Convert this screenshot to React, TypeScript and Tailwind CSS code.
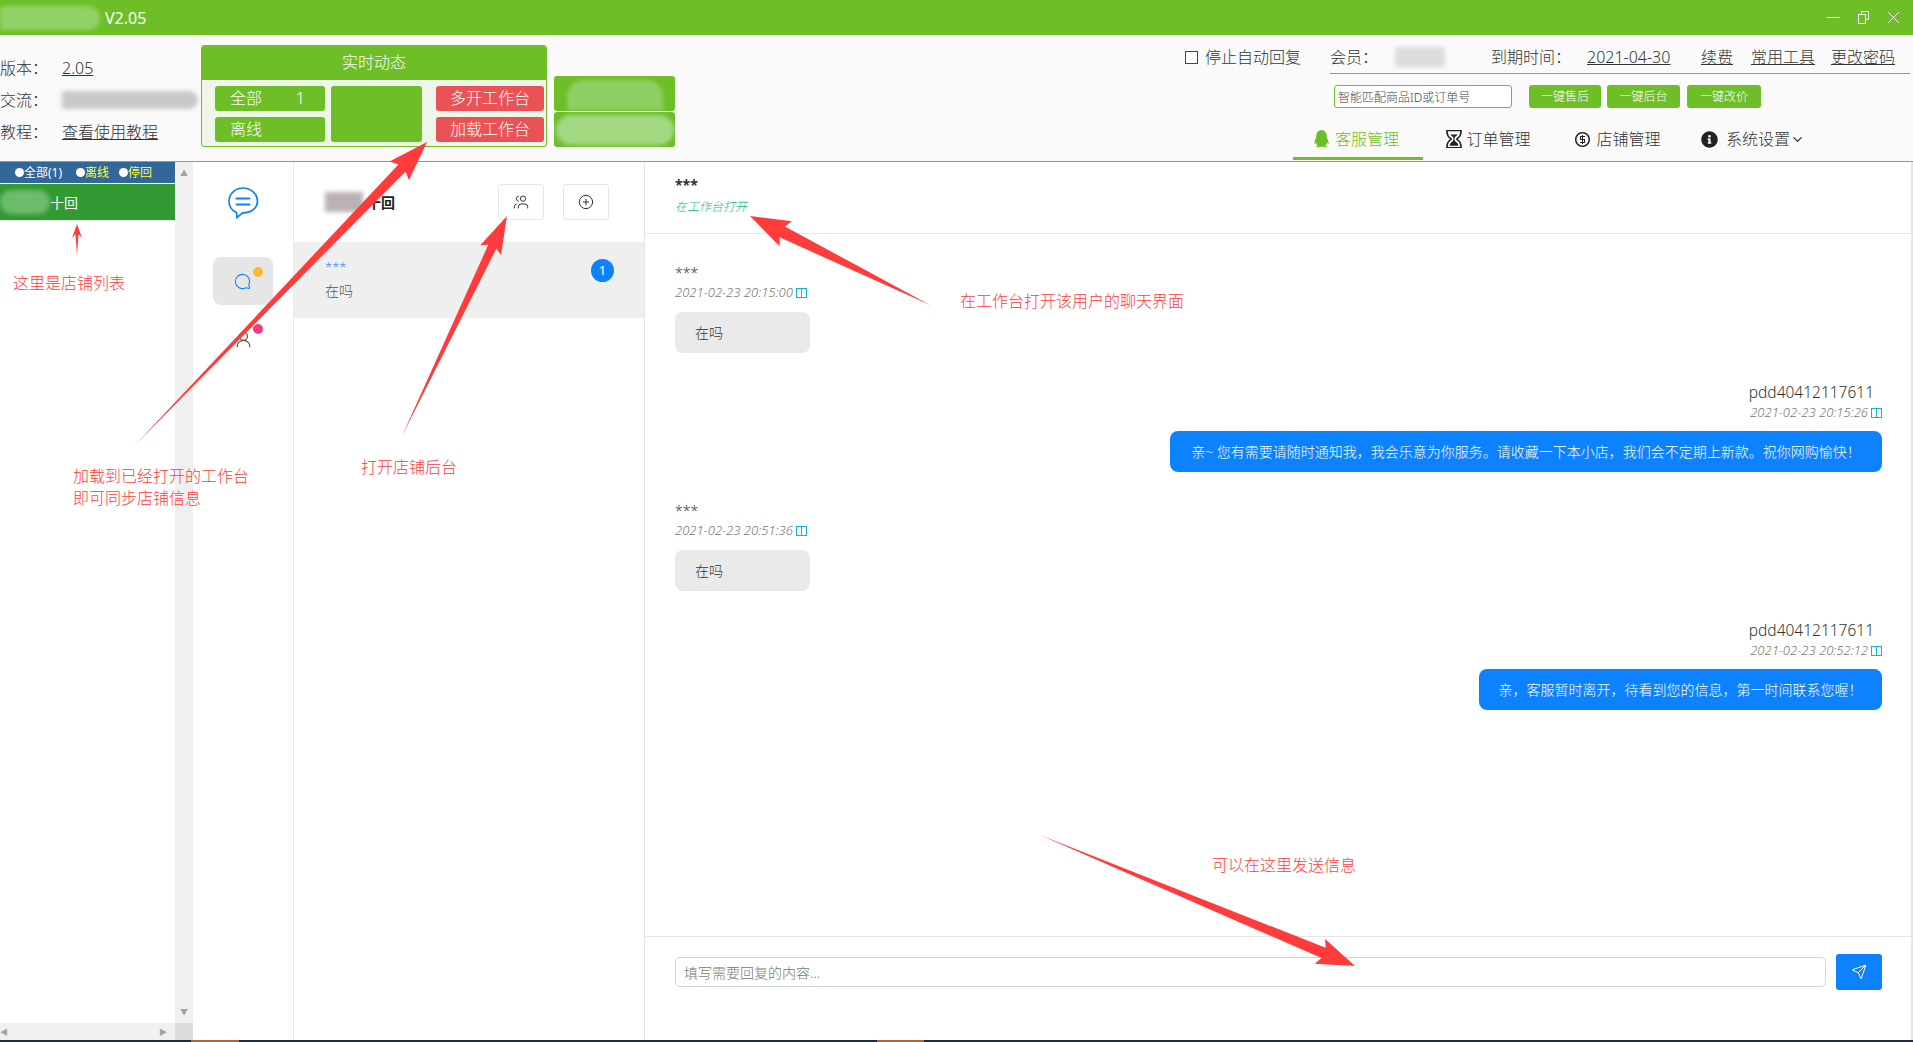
import { ChevronDown, CirclePlus, MessageCircle, Send, UserRound, Users } from 'lucide-react'
import { FaInfoCircle, FaQq } from 'react-icons/fa'
import { ImCoinDollar, ImHourGlass } from 'react-icons/im'

const arrows = [
  { from: [135, 445], to: [427, 142], w: 10, head: 27, len: 40 },
  { from: [402, 436], to: [507, 216], w: 9, head: 23, len: 38 },
  { from: [930, 305], to: [750, 216], w: 12, head: 28, len: 40 },
  { from: [1040, 835], to: [1355, 966], w: 11, head: 27, len: 38 },
  { from: [77, 256], to: [77, 224], w: 3, head: 10, len: 14 },
]

function arrowPoints(a: (typeof arrows)[number]) {
  const dx = a.to[0] - a.from[0]
  const dy = a.to[1] - a.from[1]
  const d = Math.hypot(dx, dy)
  const ux = dx / d
  const uy = dy / d
  const bx = a.to[0] - ux * a.len
  const by = a.to[1] - uy * a.len
  const p = (s: number, back = 0) => `${bx - uy * s + ux * back},${by + ux * s + uy * back}`
  return [`${a.from[0]},${a.from[1]}`, p(a.w / 2, 4), p(a.head / 2), `${a.to[0]},${a.to[1]}`, p(-a.head / 2), p(-a.w / 2, 4)].join(' ')
}

function Smudge({ className }: { className: string }) {
  return <div className={`blur-[2px] ${className}`} />
}

function Book() {
  return (
    <svg width="11" height="10" viewBox="0 0 11 10" fill="none" stroke="#13b5d6" strokeWidth="1" className="shrink-0">
      <rect x="0.5" y="0.5" width="10" height="9" />
      <path d="M5.5 0.5v9" />
    </svg>
  )
}

function TitleBar() {
  return (
    <div className="h-[35px] bg-[#6ebe28] flex items-center text-white shrink-0">
      <Smudge className="w-[100px] h-[24px] bg-[#91d168] rounded-r-full" />
      <span className="ml-[5px] text-[16px] font-normal">V2.05</span>
      <div className="ml-auto flex items-center pr-[14px]">
        <svg width="13" height="11" viewBox="0 0 13 11" stroke="white" strokeWidth="1">
          <path d="M0 5.500h13" />
        </svg>
        <svg width="11" height="13" viewBox="0 0 11 13" fill="none" stroke="white" strokeWidth="1" className="ml-[18px]">
          <rect x="0.500" y="3.500" width="7" height="9" />
          <path d="M3.500 3V0.500h7v8H8" />
        </svg>
        <svg width="11" height="11" viewBox="0 0 11 11" stroke="white" strokeWidth="0.900" className="ml-[19px]">
          <path d="M0 0l11 11M11 0L0 11" />
        </svg>
      </div>
    </div>
  )
}

function InfoRow({ label, children }: { label: string; children: React.ReactNode }) {
  return (
    <div className="h-[32px] flex items-center text-[16px] text-[#333]">
      <span className="w-[62px]">{label}</span>
      {children}
    </div>
  )
}

function Header() {
  return (
    <header className="h-[127px] shrink-0 bg-[#fafafa] border-b border-[#6ebe28] flex">
      <div className="w-[201px] shrink-0 pt-[17px]">
        <InfoRow label="版本：">
          <span className="underline">2.05</span>
        </InfoRow>
        <InfoRow label="交流：">
          <Smudge className="w-[136px] h-[18px] bg-[#c9c8c8] rounded-r-full" />
        </InfoRow>
        <InfoRow label="教程：">
          <span className="underline">查看使用教程</span>
        </InfoRow>
      </div>

      <div className="mt-[10px] w-[346px] h-[102px] border border-[#6ebe28] rounded-[3px] overflow-hidden bg-[#eff6e9] shrink-0">
        <div className="h-[34px] pb-[3px] bg-[#6ebe28] text-white text-[16px] flex items-center justify-center">实时动态</div>
        <div className="flex pl-[13px] pt-[6px] text-white text-[16px]">
          <div className="w-[110px] flex flex-col gap-[6px]">
            <div className="h-[25px] pb-[1px] rounded-[3px] bg-[#6ebe28] flex items-center justify-between pl-[15px] pr-[20px]">
              <span>全部</span>
              <span>1</span>
            </div>
            <div className="h-[25px] pb-[1px] rounded-[3px] bg-[#6ebe28] flex items-center pl-[15px]">离线</div>
          </div>
          <div className="ml-[6px] w-[91px] h-[56px] rounded-[3px] bg-[#6ebe28]" />
          <div className="ml-[14px] w-[108px] flex flex-col gap-[6px]">
            <div className="h-[25px] pb-[1px] rounded-[3px] bg-[#e95256] flex items-center justify-center">多开工作台</div>
            <div className="h-[25px] pb-[1px] rounded-[3px] bg-[#e95256] flex items-center justify-center">加载工作台</div>
          </div>
        </div>
      </div>

      <div className="ml-[7px] mt-[41px] w-[121px] flex flex-col gap-[1px] shrink-0">
        <div className="h-[35px] rounded-[3px] bg-[#6ebe28] overflow-hidden flex justify-center pt-[4px]">
          <Smudge className="w-[96px] h-[30px] rounded-t-[16px] bg-[#8fcf64]" />
        </div>
        <div className="h-[35px] rounded-[3px] bg-[#6ebe28] overflow-hidden flex justify-center items-center">
          <Smudge className="w-[118px] h-[30px] rounded-full bg-[#a3d982]" />
        </div>
      </div>

      <div className="ml-auto w-[728px] flex flex-col text-[#333]">
        <div className="h-[39px] flex items-center text-[16px]">
          <div className="w-[145px] pt-[5px] flex items-center">
            <span className="w-[13px] h-[13px] border border-[#444] bg-white" />
            <span className="ml-[7px]">停止自动回复</span>
          </div>
          <div className="flex-1 h-full pt-[5px] border-b border-[#6ebe28] flex items-center mr-[3px] whitespace-nowrap">
            <span className="w-[65px]">会员：</span>
            <Smudge className="w-[50px] h-[20px] bg-[#dcdcdc]" />
            <span className="ml-[46px] w-[96px]">到期时间：</span>
            <span className="underline w-[86px]">2021-04-30</span>
            <span className="underline ml-[28px]">续费</span>
            <span className="underline ml-[18px]">常用工具</span>
            <span className="underline ml-[16px]">更改密码</span>
          </div>
        </div>
        <div className="mt-[11px] ml-[149px] flex text-[12px]">
          <input
            readOnly
            value="智能匹配商品ID或订单号"
            className="w-[178px] h-[23px] px-[3px] rounded-[3px] border border-[#6ebe28] bg-white text-[#444] outline-none"
          />
          <div className="ml-[17px] w-[72px] h-[23px] rounded-[3px] bg-[#6ebe28] text-white flex items-center justify-center">一键售后</div>
          <div className="ml-[6px] w-[73px] h-[23px] rounded-[3px] bg-[#6ebe28] text-white flex items-center justify-center">一键后台</div>
          <div className="ml-[7px] w-[74px] h-[23px] rounded-[3px] bg-[#6ebe28] text-white flex items-center justify-center">一键改价</div>
        </div>
        <nav className="mt-[12px] ml-[108px] flex text-[16px]">
          <div className="w-[130px] h-[40px] border-b-[3px] border-[#6ebe28] text-[#6ebe28] flex items-center justify-center gap-[5px] pr-[4px]">
            <FaQq size={17} />
            <span>客服管理</span>
          </div>
          <div className="w-[130px] h-[40px] pb-[2px] flex items-center justify-center gap-[3px]">
            <ImHourGlass size={18} className="text-[#222]" />
            <span>订单管理</span>
          </div>
          <div className="w-[130px] h-[40px] pb-[2px] flex items-center justify-center gap-[5px]">
            <ImCoinDollar size={16} className="text-[#222]" />
            <span>店铺管理</span>
          </div>
          <div className="w-[130px] h-[40px] pb-[2px] flex items-center justify-center gap-[8px] pl-[10px] whitespace-nowrap">
            <FaInfoCircle size={17} className="text-[#222]" />
            <span className="flex items-center">
              系统设置
              <ChevronDown size={15} strokeWidth={2} />
            </span>
          </div>
        </nav>
      </div>
    </header>
  )
}

function ShopPane() {
  return (
    <div className="w-[193px] shrink-0 flex flex-col">
      <div className="flex-1 flex min-h-0">
        <div className="w-[175px] flex flex-col">
          <div className="h-[21px] bg-[#336699] flex items-center pl-[15px] text-[12px] font-normal text-white">
            <span className="w-[9px] h-[9px] rounded-full bg-white" />
            <span>全部(1)</span>
            <span className="ml-[14px] w-[9px] h-[9px] rounded-full bg-white" />
            <span className="text-[#ffff33]">离线</span>
            <span className="ml-[10px] w-[9px] h-[9px] rounded-full bg-white" />
            <span className="text-[#ffff33]">停回</span>
          </div>
          <div className="mt-[1px] h-[37px] bg-[#339933] flex items-center text-white text-[14px] font-normal border-b border-[#e5e5e5]">
            <Smudge className="w-[50px] h-[24px] bg-[#6dbb6d] rounded-full" />
            <span>十回</span>
          </div>
        </div>
        <div className="w-[18px] bg-[#f0f0f0] flex flex-col items-center justify-between py-[7px] text-[8px] leading-none text-[#a3a3a3]">
          <span>▲</span>
          <span>▼</span>
        </div>
      </div>
      <div className="h-[17px] shrink-0 flex">
        <div className="w-[175px] bg-[#f0f0f0] flex items-center justify-between text-[8px] leading-none text-[#a3a3a3] pr-[8px]">
          <span>◀</span>
          <span>▶</span>
        </div>
        <div className="w-[18px] bg-[#dcdcdc]" />
      </div>
    </div>
  )
}

function NavRail() {
  return (
    <div className="w-[101px] shrink-0 border-r border-[#e9e9e9] flex flex-col items-center">
      <svg width="32" height="34" viewBox="0 0 32 34" fill="none" stroke="#0d82ff" strokeWidth="1.700" strokeLinecap="round" className="mt-[24px]">
        <path d="M16 2C8.300 2 2 7.800 2 15c0 5.600 3.600 9.800 7.500 11.600L10 31.500l5.500-4.600c8 .5 15-4.600 15-11.900C30.500 7.800 23.700 2 16 2Z" />
        <path d="M9.500 12.500h13M9.500 18.500h13" strokeWidth="2" />
      </svg>
      <div className="relative mt-[37px] w-[60px] h-[48px] bg-[#e6e6e6] rounded-[8px] flex items-center justify-center">
        <MessageCircle size={17} strokeWidth={1.500} className="text-[#0d82ff] -scale-x-100 mr-[1px]" />
        <span className="absolute left-[40px] top-[10px] w-[10px] h-[10px] rounded-full bg-[#ffb52e]" />
      </div>
      <div className="relative mt-[19px] w-[60px] flex justify-center">
        <UserRound size={19} strokeWidth={1.500} className="text-[#555] mt-[6px]" />
        <span className="absolute left-[40px] top-0 w-[10px] h-[10px] rounded-full bg-[#f73a78]" />
      </div>
    </div>
  )
}

function ContactList() {
  return (
    <div className="w-[351px] shrink-0 border-r border-[#e6e6e6]">
      <div className="h-[71px] pt-[9px] flex items-center pl-[31px]">
        <Smudge className="w-[38px] h-[20px] bg-[#bbb3b3]" />
        <span className="ml-[4px] text-[14px] font-bold text-[#222]">十回</span>
        <div className="ml-auto mr-[35px] flex gap-[19px]">
          <div className="w-[46px] h-[36px] rounded-[3px] border border-[#e6e6e6] flex items-center justify-center">
            <Users size={16} strokeWidth={1.500} className="text-[#333] -scale-x-100" />
          </div>
          <div className="w-[46px] h-[36px] rounded-[3px] border border-[#e6e6e6] flex items-center justify-center">
            <CirclePlus size={16} strokeWidth={1.500} className="text-[#333]" />
          </div>
        </div>
      </div>
      <div className="mt-[9px] h-[76px] bg-[#efefef] flex pl-[31px] pr-[30px]">
        <div className="pt-[15px]">
          <div className="text-[13px] leading-[20px] text-[#3f87f5]">***</div>
          <div className="mt-[4px] text-[14px] leading-[20px] text-[#555]">在吗</div>
        </div>
        <span className="ml-auto mt-[17px] w-[23px] h-[23px] rounded-full bg-[#0d82ff] text-white text-[13px] font-normal flex items-center justify-center">1</span>
      </div>
    </div>
  )
}

function Incoming({ time, first }: { time: string; first?: boolean }) {
  return (
    <div className={first ? 'pt-[1px]' : 'mt-[28px] pt-[1px]'}>
      <div className="h-[20px] text-[14px] leading-[20px] text-[#333]">***</div>
      <div className="h-[20px] flex items-center gap-[3px] text-[13px] italic text-[#777]">
        <span>{time}</span>
        <Book />
      </div>
      <div className="mt-[9px] w-[135px] h-[41px] rounded-[8px] bg-[#eaeaea] pl-[20px] flex items-center text-[14px] text-[#333]">在吗</div>
    </div>
  )
}

function Outgoing({ time, text, width }: { time: string; text: string; width: string }) {
  return (
    <div className="mt-[29px] flex flex-col items-end">
      <div className="h-[20px] pr-[8px] text-[15.500px] leading-[20px] text-[#333]">pdd40412117611</div>
      <div className="h-[21px] flex items-center gap-[3px] text-[13px] italic text-[#777]">
        <span>{time}</span>
        <Book />
      </div>
      <div className={`mt-[8px] h-[41px] rounded-[8px] bg-[#0d82ff] text-white text-[14px] flex items-center justify-center whitespace-nowrap ${width}`}>{text}</div>
    </div>
  )
}

function ChatPane() {
  return (
    <div className="flex-1 min-w-0 flex flex-col border-r-2 border-[#e6e6e6]">
      <div className="h-[72px] shrink-0 border-b border-[#e6e6e6] pl-[30px] pt-[13px]">
        <div className="text-[14px] leading-[20px] font-bold text-[#333]">***</div>
        <div className="mt-[2px] text-[12px] leading-[20px] italic text-[#10b981]">在工作台打开</div>
      </div>
      <div className="flex-1 min-h-0 pl-[30px] pr-[29px] pt-[28px]">
        <Incoming first time="2021-02-23 20:15:00" />
        <Outgoing time="2021-02-23 20:15:26" width="w-[712px]" text="亲~ 您有需要请随时通知我，我会乐意为你服务。请收藏一下本小店，我们会不定期上新款。祝你网购愉快！" />
        <Incoming time="2021-02-23 20:51:36" />
        <Outgoing time="2021-02-23 20:52:12" width="w-[403px]" text="亲，客服暂时离开，待看到您的信息，第一时间联系您喔！" />
      </div>
      <div className="h-[104px] shrink-0 border-t border-[#e6e6e6] pl-[30px] pr-[29px] pt-[17px] flex items-start">
        <input
          readOnly
          placeholder="填写需要回复的内容..."
          className="mt-[3px] flex-1 h-[30px] px-[8px] rounded-[5px] border border-[#ced4da] text-[14px] outline-none placeholder:text-[#777]"
        />
        <div className="ml-[10px] w-[46px] h-[36px] rounded-[3px] bg-[#0d82ff] flex items-center justify-center">
          <Send size={16} strokeWidth={1.500} className="text-white" />
        </div>
      </div>
    </div>
  )
}

function Annotations() {
  const notes = [
    { text: '这里是店铺列表', cls: 'left-[13px] top-[273px]' },
    { text: '加载到已经打开的工作台', cls: 'left-[73px] top-[466px]' },
    { text: '即可同步店铺信息', cls: 'left-[73px] top-[488px]' },
    { text: '打开店铺后台', cls: 'left-[361px] top-[457px]' },
    { text: '在工作台打开该用户的聊天界面', cls: 'left-[960px] top-[291px]' },
    { text: '可以在这里发送信息', cls: 'left-[1212px] top-[855px]' },
  ]
  return (
    <>
      <svg width="1913" height="1042" className="absolute inset-0 pointer-events-none">
        {arrows.map((a, i) => (
          <polygon key={i} points={arrowPoints(a)} fill="#ff3b3b" />
        ))}
      </svg>
      {notes.map((n) => (
        <div key={n.text} className={`absolute text-[16px] leading-[20px] text-[#ff3b3b] whitespace-nowrap ${n.cls}`}>
          {n.text}
        </div>
      ))}
    </>
  )
}

export default function App() {
  return (
    <div className="relative h-[1042px] overflow-hidden bg-white flex flex-col font-['Noto_Sans','Noto_Sans_CJK_SC',sans-serif] font-light">
      <TitleBar />
      <Header />
      <main className="flex-1 min-h-0 flex">
        <ShopPane />
        <NavRail />
        <ContactList />
        <ChatPane />
      </main>
      <div className="h-[2px] shrink-0 bg-[#1e2d3b] flex">
        <div className="ml-[191px] w-[48px] bg-[#b5652b]" />
        <div className="ml-[638px] w-[47px] bg-[#b5652b]" />
      </div>
      <Annotations />
    </div>
  )
}
